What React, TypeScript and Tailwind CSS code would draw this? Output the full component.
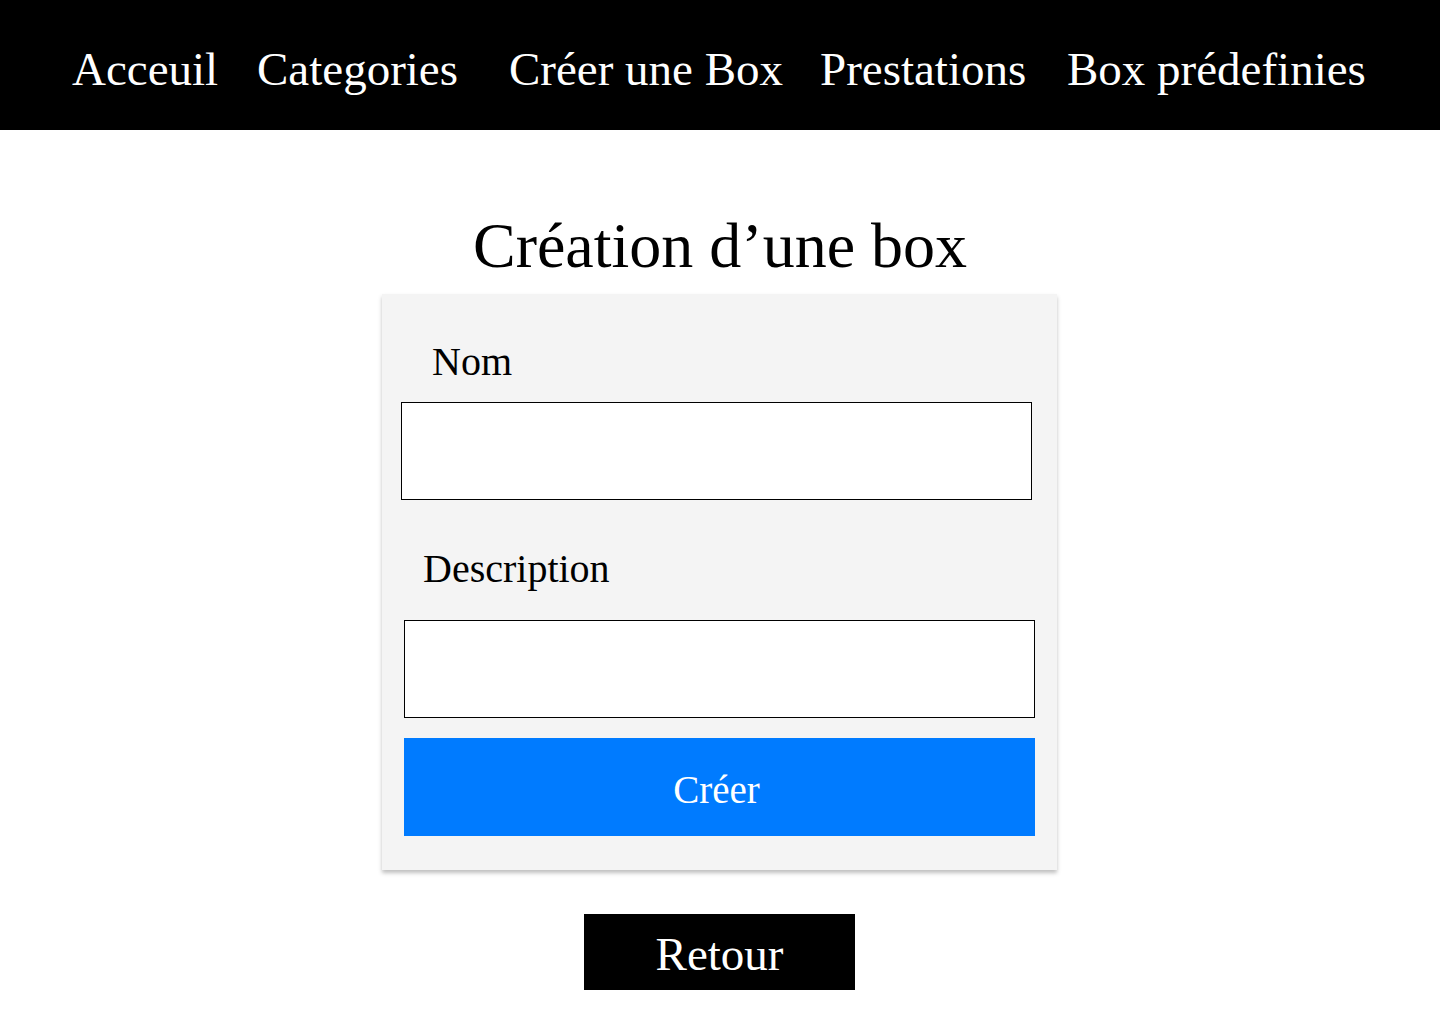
export default function App() {
  const serif = 'font-["Liberation_Serif",serif]';
  return (
    <div className={`min-h-screen bg-white ${serif}`}>
      <nav className="flex h-[130px] items-center bg-black pl-[72px] pt-[8px] text-[47px] leading-none text-white">
        <a className="w-[185px] whitespace-nowrap">Acceuil</a>
        <a className="w-[252px] whitespace-nowrap">Categories</a>
        <a className="w-[311px] whitespace-nowrap">Créer une Box</a>
        <a className="w-[247px] whitespace-nowrap">Prestations</a>
        <a className="whitespace-nowrap">Box prédefinies</a>
      </nav>

      <main className="flex flex-col items-center">
        <h1 className="mt-[84px] text-center text-[64px] leading-[64px] text-black">Création d’une box</h1>

        <form className="mr-[1px] mt-[16px] flex w-[675px] flex-col bg-[#f4f4f4] pb-[34px] shadow-[0_3px_4px_rgba(0,0,0,0.25)]">
          <label className="ml-[50px] mt-[48px] text-[40px] leading-[40px] text-black">Nom</label>
          <input className="ml-[19px] mt-[20px] h-[98px] w-[631px] border border-black bg-white outline-none" />
          <label className="ml-[41px] mt-[49px] text-[40px] leading-[40px] text-black">Description</label>
          <input className="ml-[22px] mt-[31px] h-[98px] w-[631px] border border-black bg-white outline-none" />
          <button
            type="button"
            className="ml-[22px] mt-[20px] flex h-[98px] w-[631px] items-center justify-center bg-[#007bff] pr-[6px] pt-[4px] text-[39px] leading-none text-white"
          >
            Créer
          </button>
        </form>

        <button
          type="button"
          className="mr-[1px] mt-[44px] flex h-[76px] w-[271px] items-center justify-center bg-black pt-[4px] text-[47px] leading-none text-white"
        >
          Retour
        </button>
      </main>
    </div>
  );
}
